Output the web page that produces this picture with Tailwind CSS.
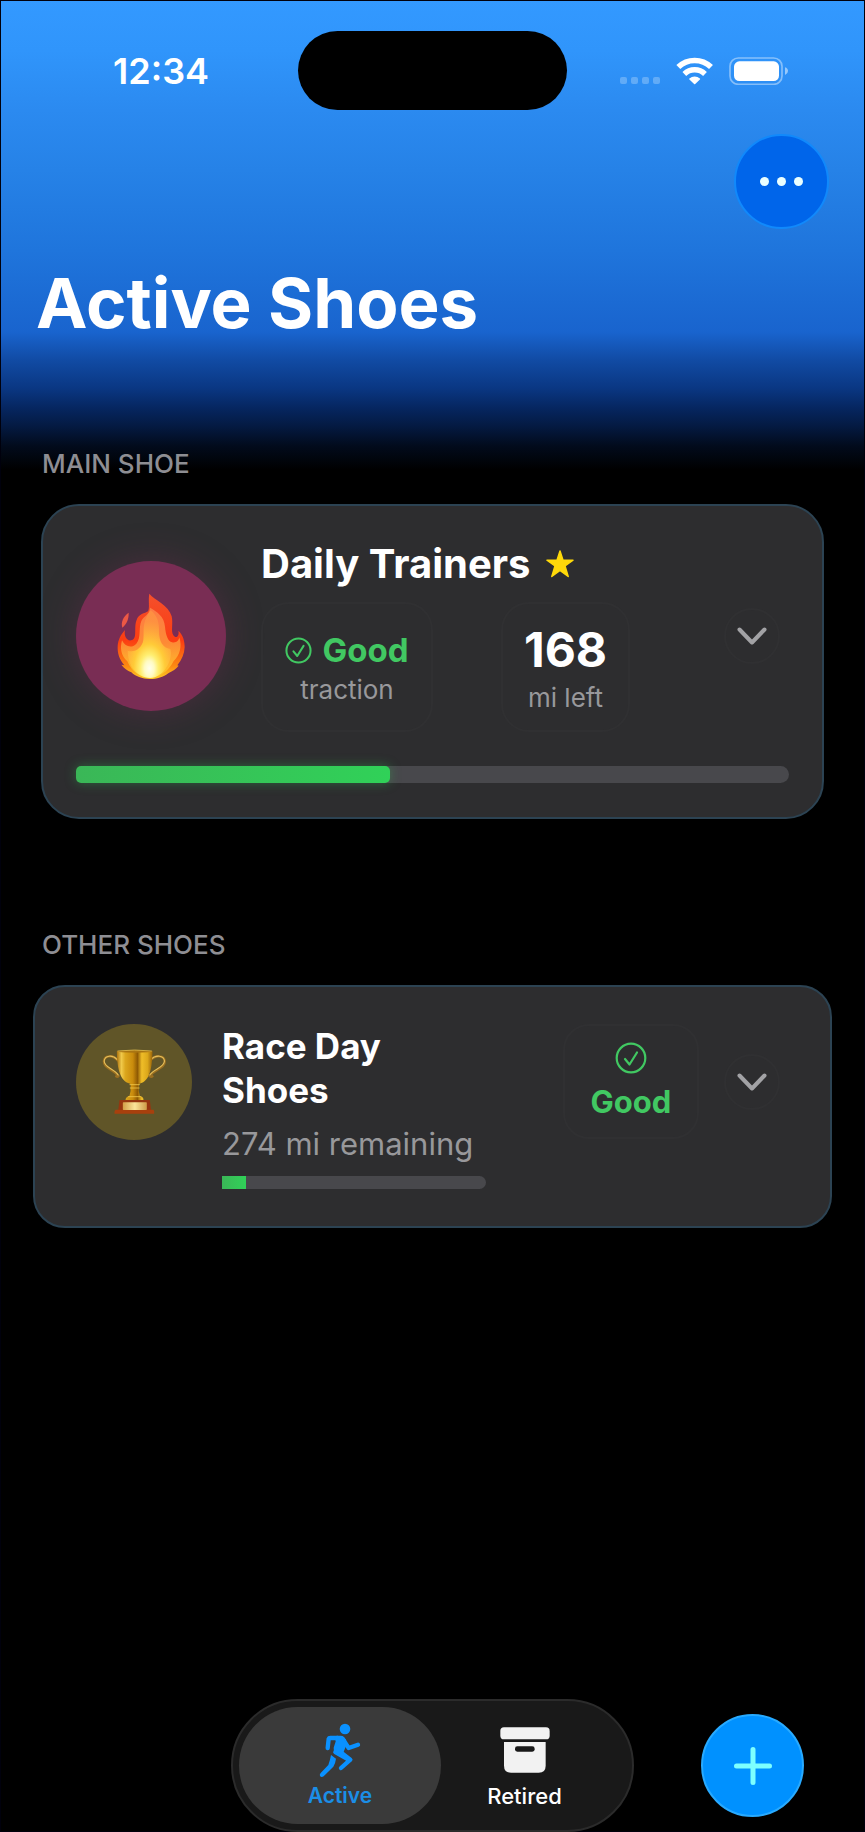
<!DOCTYPE html>
<html lang="en">
<head>
<meta charset="utf-8">
<meta name="viewport" content="width=device-width, initial-scale=1">
<title>Active Shoes</title>
<script src="https://cdn.jsdelivr.net/npm/@tailwindcss/browser@4"></script>
</head>
<body class="bg-black">
<div class="flex min-h-screen flex-col bg-black bg-[linear-gradient(to_bottom,#3399ff_0px,#3095fb_50px,#2b8af0_110px,#2682e7_170px,#1f75dc_250px,#1964ce_332px,#114ba4_360px,#0a3783_388px,#062660_408px,#041a42_426px,#020b1c_446px,#000000_470px)] font-['Inter',sans-serif] text-white shadow-[inset_0_0_0_1px_#00000c]">

  <header>
    <!-- Status bar -->
    <div class="grid grid-cols-[1fr_auto_1fr] items-center pt-[31px]">
      <time class="pl-[113px] text-[36px] leading-10 font-semibold">12:34</time>
      <div class="h-[79px] w-[269px] rounded-full bg-black"></div>
      <div class="flex items-center justify-end gap-4 pr-[76px]">
        <div class="flex gap-1 pt-[19px] text-white/25">
          <i class="size-[7px] rounded-[2px] bg-current"></i><i class="size-[7px] rounded-[2px] bg-current"></i><i class="size-[7px] rounded-[2px] bg-current"></i><i class="size-[7px] rounded-[2px] bg-current"></i>
        </div>
        <svg class="h-[28px] w-[37px]" viewBox="732 170 111 84" fill="none" stroke="#fff" stroke-width="17" stroke-linejoin="round" aria-label="Wi-Fi">
          <path d="M739 200A71 71 0 0 1 837 200"/>
          <path d="M757 221A44 44 0 0 1 819 221" stroke-width="16"/>
          <path d="M788 249L774 236A21 21 0 0 1 802 236Z" fill="#fff" stroke-width="5"/>
        </svg>
        <svg class="h-[28px] w-[60px]" viewBox="888 170 180 84" aria-label="Battery">
          <rect x="891" y="173" width="156" height="79" rx="25" fill="none" stroke="#fff" stroke-opacity=".42" stroke-width="5"/>
          <rect x="903" y="183" width="135" height="59" rx="16" fill="#fff"/>
          <path d="M1056 201Q1065 204 1065 212T1056 224Z" fill="#fff" fill-opacity=".5"/>
        </svg>
      </div>
    </div>

    <div class="mt-6 flex justify-end pr-9">
      <button type="button" aria-label="More options" class="flex size-[95px] items-center justify-center gap-2 rounded-full border-2 border-[#1189fb] bg-[#0065ea]">
        <i class="size-[9px] rounded-full bg-[#eaffff]"></i><i class="size-[9px] rounded-full bg-[#eaffff]"></i><i class="size-[9px] rounded-full bg-[#eaffff]"></i>
      </button>
    </div>

    <h1 class="mt-8 pl-9 text-[69px] leading-[84px] font-bold">Active Shoes</h1>
  </header>

  <main class="pt-[103px]">
    <section>
      <h2 class="pl-[42px] text-[26px] leading-8 font-medium text-[#8e8e93]">MAIN SHOE</h2>
      <article class="mx-[41px] mt-6 rounded-[38px] border-2 border-[#2c4353] bg-[#2d2d2f] px-[33px] py-[34px]">
        <div class="flex items-center">
          <div class="flex size-[150px] shrink-0 items-center justify-center rounded-full bg-[#792d54] shadow-[0_0_36px_#792d5466]">
            <svg class="h-[87px] w-[70px]" viewBox="48 36 210 261" aria-label="Fire">
              <defs>
                <linearGradient id="fl1" x1="0" y1="0" x2="0" y2="1"><stop offset="0" stop-color="#f4502c"/><stop offset=".55" stop-color="#fb3d12"/><stop offset=".85" stop-color="#fb8a12"/><stop offset="1" stop-color="#ffc825"/></linearGradient>
                <linearGradient id="fl2" x1="0" y1="0" x2="0" y2="1"><stop offset="0" stop-color="#fd7b45"/><stop offset=".5" stop-color="#fd8a35"/><stop offset="1" stop-color="#ffcc26"/></linearGradient>
                <radialGradient id="fl3" cx=".5" cy=".86" r=".7"><stop offset="0" stop-color="#ffffee"/><stop offset=".16" stop-color="#fffbc4"/><stop offset=".3" stop-color="#ffee70"/><stop offset=".52" stop-color="#ffcb38"/><stop offset="1" stop-color="#ff9e42" stop-opacity=".55"/></radialGradient>
              </defs>
              <path d="M86 95C69 106 62 124 67 140C78 130 87 116 86 95Z" fill="#ec5845"/>
              <path d="M148 38C164 58 206 72 215 106C220 128 212 150 220 163C228 175 239 165 235 149C250 162 254 182 254 198C253 218 246 236 232 253L236 254C228 264 218 270 206 276C190 289 170 294 150 294C126 294 106 286 94 274C82 269 72 262 64 251L73 253C58 236 52 217 53 196C54 176 63 160 75 147C71 164 80 180 93 178C114 174 101 141 109 119C117 96 134 99 144 91C150 82 144 57 148 38Z" fill="url(#fl1)"/>
              <path d="M150 80C171 92 193 106 195 137C197 161 204 181 216 184C230 187 237 177 238 169C247 196 239 224 221 240C205 272 178 290 150 291C118 289 95 271 82 241C62 224 60 200 66 178C76 199 96 202 109 188C124 171 115 142 124 120C131 104 149 102 150 80Z" fill="url(#fl2)"/>
              <path d="M152 88C173 104 178 128 177 151C177 180 188 202 211 204C220 229 197 289 150 291C108 288 84 254 83 209C105 216 126 201 130 177C134 151 123 128 152 88Z" fill="url(#fl3)"/>
            </svg>
          </div>
          <div class="ml-[35px]">
            <div class="flex items-center gap-4">
              <h3 class="text-[40px] leading-12 font-bold">Daily Trainers</h3>
              <svg class="size-7" viewBox="0 0 28 28" fill="#ffd90a" stroke="#ffd90a" stroke-width="1.5" stroke-linejoin="round" aria-label="Main shoe"><path d="M14 1L17 10.200H27L19 16L22.200 26.500L14 20.500L5.800 26.500L9 16L1 10.200H11Z"/></svg>
            </div>
            <div class="mt-[14px] flex gap-[68px]">
              <div class="flex w-[172px] flex-col items-center rounded-[28px] border-2 border-[#303032] pt-[26px]">
                <div class="flex h-10 items-center gap-[10px] text-[#41c862]">
                  <svg class="size-[27px]" viewBox="0 0 32 32" fill="none" stroke="currentColor" stroke-width="2.400" stroke-linecap="round" stroke-linejoin="round" aria-hidden="true"><circle cx="16" cy="16" r="14.300"/><path d="M10 17L14.500 22.500L22 10.500"/></svg>
                  <strong class="text-[33px] leading-10 font-bold">Good</strong>
                </div>
                <span class="mt-1 text-[26px] leading-8 text-[#98989b]">traction</span>
              </div>
              <div class="flex w-[129px] flex-col items-center rounded-[28px] border-2 border-[#303032] pt-[22px] pb-4">
                <strong class="text-[48px] leading-12 font-bold">168</strong>
                <span class="mt-2 text-[26px] leading-8 text-[#98989b]">mi left</span>
              </div>
            </div>
          </div>
          <button type="button" aria-label="Expand Daily Trainers" class="mr-[9px] ml-auto flex size-14 items-center justify-center rounded-full border-2 border-[#303032]">
            <svg class="h-[18px] w-[30px]" viewBox="0 0 30 18" fill="none" stroke="#a2a2a5" stroke-width="4" stroke-linecap="round" stroke-linejoin="round"><path d="M2.500 2.500L15 15.500L27.500 2.500"/></svg>
          </button>
        </div>
        <div role="progressbar" aria-label="Daily Trainers wear" aria-valuenow="44" class="mt-[34px] h-[17px] rounded-full bg-[#48484c]">
          <div class="h-full rounded-[5px] bg-linear-to-r from-[#3ab757] to-[#30d158] shadow-[0_0_12px_#30d15859]" style="width:44%"></div>
        </div>
      </article>
    </section>

    <section class="pt-[110px]">
      <h2 class="pl-[42px] text-[26px] leading-8 font-medium text-[#8e8e93]">OTHER SHOES</h2>
      <article class="mx-[33px] mt-6 flex items-start rounded-[32px] border-2 border-[#2c4353] bg-[#2d2d2f] px-[41px] py-[37px]">
        <div class="flex size-[116px] shrink-0 items-center justify-center rounded-full bg-[#605528]">
          <svg class="h-[66px] w-[65px]" viewBox="34 30 194 198" aria-label="Trophy">
            <defs>
              <linearGradient id="tr1"><stop offset="0" stop-color="#a8700d"/><stop offset=".13" stop-color="#f0c94a"/><stop offset=".24" stop-color="#dba61d"/><stop offset=".45" stop-color="#c98b0c"/><stop offset=".58" stop-color="#8f5a04"/><stop offset=".7" stop-color="#efbd28"/><stop offset=".86" stop-color="#dca81b"/><stop offset="1" stop-color="#996309"/></linearGradient>
              <linearGradient id="tr2"><stop offset="0" stop-color="#d39f47"/><stop offset=".5" stop-color="#fae59a"/><stop offset="1" stop-color="#cf9b46"/></linearGradient>
            </defs>
            <g fill="none" stroke-linecap="round">
              <path d="M80 64C66 46 40 49 39 67C38 88 70 91 83 111Q80 115 76 112M179 64C194 46 221 49 222 67C223 88 190 91 176 111Q181 115 185 112" stroke="#9b6f20" stroke-width="7"/>
              <path d="M79 62C65 46 42 49 40 66C40 86 71 90 82 108M180 62C195 46 219 49 221 66C220 86 189 90 177 108" stroke="#e3bd5a" stroke-width="3.500"/>
            </g>
            <path d="M78 37H185C184 78 180 128 146 134Q143 139 144 145Q142 158 147 170Q159 173 158 184H104Q104 173 116 170Q121 158 119 145Q121 139 118 134C84 128 79 78 78 37Z" fill="url(#tr1)"/>
            <ellipse cx="131.500" cy="37" rx="53.500" ry="4" fill="#a97512"/>
            <path d="M80 36Q131 30 183 36" fill="none" stroke="#f3cf59" stroke-width="2"/>
            <path d="M116 137H147M117 147H146M112 173H150" stroke="#f0c64a" stroke-width="2.500"/>
            <path d="M86 183H177L181 215H82Z" fill="#96360f"/>
            <path d="M74 212H188Q191 215 190 224H71Q70 215 74 212Z" fill="#a8400d"/>
            <rect x="96" y="190" width="72" height="23" rx="2" fill="url(#tr2)"/>
          </svg>
        </div>
        <div class="ml-[30px] w-[264px]">
          <h3 class="text-[35px] leading-11 font-bold">Race Day<br>Shoes</h3>
          <p class="mt-3 text-[31px] leading-10 whitespace-nowrap text-[#98989b]">274 mi remaining</p>
          <div role="progressbar" aria-label="Race Day Shoes wear" aria-valuenow="9" class="mt-3 h-[13px] rounded-r-full bg-[#48484c]">
            <div class="h-full bg-linear-to-r from-[#3ab757] to-[#30d158]" style="width:9%"></div>
          </div>
        </div>
        <div class="ml-auto flex h-[115px] w-[136px] flex-col items-center rounded-[26px] border-2 border-[#303032] pt-4 text-[#41c862]">
          <svg class="size-8" viewBox="0 0 32 32" fill="none" stroke="currentColor" stroke-width="2.200" stroke-linecap="round" stroke-linejoin="round" aria-hidden="true"><circle cx="16" cy="16" r="14.300"/><path d="M10 17L14.500 22.500L22 10.500"/></svg>
          <strong class="mt-2 text-[31px] leading-10 font-bold">Good</strong>
        </div>
        <button type="button" aria-label="Expand Race Day Shoes" class="mt-[30px] mr-[9px] ml-[25px] flex size-14 items-center justify-center rounded-full border-2 border-[#303032]">
          <svg class="h-[18px] w-[30px]" viewBox="0 0 30 18" fill="none" stroke="#a2a2a5" stroke-width="4" stroke-linecap="round" stroke-linejoin="round"><path d="M2.500 2.500L15 15.500L27.500 2.500"/></svg>
        </button>
      </article>
    </section>
  </main>

  <footer class="mt-auto grid grid-cols-[1fr_auto_1fr] items-center pt-10">
    <nav aria-label="Shoe lists" class="col-start-2 flex rounded-full border-2 border-[#2b2b2b] bg-[#191919] p-[6px]">
      <a href="#active" aria-current="page" class="flex h-[117px] w-[202px] flex-col items-center rounded-full bg-[#3a3a3a] pt-4 text-[#1b8ee6]">
        <svg class="h-[55px] w-[42px]" viewBox="300 99 126 165" fill="none" stroke="#0a91ff" stroke-width="14" stroke-linecap="round" stroke-linejoin="round" aria-hidden="true">
          <circle cx="378" cy="117" r="16" fill="#0a91ff" stroke="none"/>
          <path d="M326 174L329 147Q330 144 334 144H356" stroke-width="13"/>
          <path d="M374 151L389 174L417 164" stroke-width="13"/>
          <path d="M354 144H366Q372 145 375 152L377 160Q368 164 367 174L365 187L394 209L366 234M349 186L382 205" stroke-width="13"/>
          <path d="M352 142H369L379 162L368 190L349 186L348 174L354 155Z" fill="#0a91ff" stroke-width="8"/>
          <path d="M336 195L351 206Q349 222 343 230L314 259Q307 264 303 258Q301 253 305 249L328 225Q333 212 336 195Z" fill="#0a91ff" stroke="none"/>
        </svg>
        <span class="mt-1 text-[21px] leading-7 font-semibold">Active</span>
      </a>
      <a href="#retired" class="flex h-[117px] w-[185px] flex-col items-center pt-5 pr-[18px] text-white">
        <svg class="h-[46px] w-[50px]" viewBox="842 110 150 138" aria-hidden="true">
          <rect x="843" y="111" width="148" height="36" rx="11" fill="#f2f2f2"/>
          <path d="M854 155H979V226Q979 247 958 247H875Q854 247 854 226Z" fill="#f2f2f2"/>
          <rect x="887" y="168" width="59" height="16" rx="7" fill="#191919"/>
        </svg>
        <span class="mt-[9px] text-[22px] leading-7 font-medium">Retired</span>
      </a>
    </nav>
    <button type="button" aria-label="Add shoe" class="mr-[61px] flex size-[103px] items-center justify-center justify-self-end rounded-full border-2 border-[#28aaff] bg-[#0091ff]">
      <svg class="size-[38px]" viewBox="0 0 38 38" stroke="#7dffff" stroke-width="5" stroke-linecap="round"><path d="M19 2.500V35.500M2.500 19H35.500"/></svg>
    </button>
  </footer>
</div>
</body>
</html>
